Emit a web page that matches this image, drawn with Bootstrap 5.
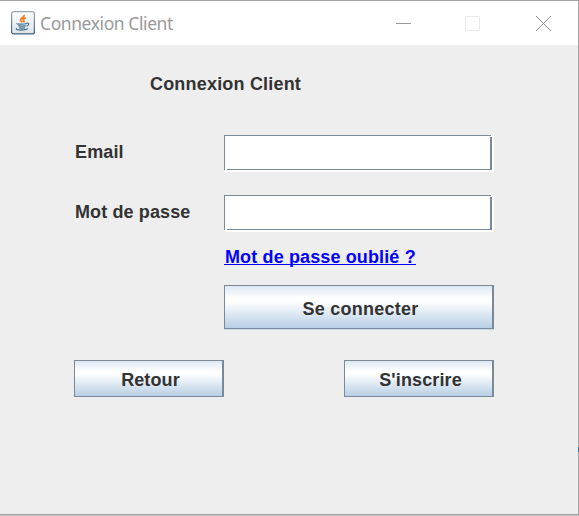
<!DOCTYPE html>
<html lang="fr">
<head>
<meta charset="utf-8">
<meta name="viewport" content="width=device-width, initial-scale=1">
<title>Connexion Client</title>
<link href="https://cdn.jsdelivr.net/npm/bootstrap@5.3.0/dist/css/bootstrap.min.css" rel="stylesheet">
<style>
body { font: bold 18px/20px "Liberation Sans", Arial, sans-serif; color: #333; background: #c4c4c4; overflow: hidden; }
.app-window { width: 579px; height: 515px; background: #eee; border: solid #a3a3a3; border-width: 1px 1px 1px 0; }
.title-bar { height: 44px; background: #fff; padding-left: 11px; }
.title-text { font: 17.5px/24px "Noto Sans", "Open Sans", sans-serif; letter-spacing: -.42px; color: #999; margin-left: 5px; }
.win-controls { gap: 55px; margin-right: 27px; }
.win-controls svg:first-child { margin-right: -1px; }
.win-controls svg:last-child { margin-left: 1px; }
.form-area { width: 420px; margin-left: 74px; }
.heading { font: inherit; letter-spacing: .19px; padding: 29px 0 0 76px; height: 90px; }
.form-line { height: 60px; }
.form-line + .form-line { height: 52px; }
.form-line label { width: 150px; padding: 7px 0 0 1px; letter-spacing: .12px; }
.swing-field { width: 270px; height: 37px; border: 0; padding: 4px 6px; outline: 0;
  background:
    linear-gradient(#7a8a99,#7a8a99) 0 0/267px 1px,
    linear-gradient(#7a8a99,#7a8a99) 0 0/1px 35px,
    linear-gradient(#7a8a99,#7a8a99) 3px 34px/265px 1px,
    linear-gradient(#7a8a99,#7a8a99) 266px 2px/2px 33px,
    linear-gradient(#eee,#eee) 0 35px/1px 2px,
    linear-gradient(#eee,#eee) 268px 0/2px 1px,
    #fff;
  background-repeat: no-repeat; }
.forgot { color: #00f; margin-left: 151px; letter-spacing: .13px; text-decoration: none; height: 20px; position: relative; }
.forgot::after { content: ""; position: absolute; left: -1px; right: 0; top: 17px; height: 1px; background: #00f; }
.swing-btn { font: inherit; letter-spacing: .12px; color: #333; border: solid #7a8a99; border-width: 1px 2px 1px 1px; border-radius: 0; padding: 0;
  height: 37px; width: 150px; background: linear-gradient(#dde8f3 0%, #fff 30%, #fff 36%, #b8cfe5 100%); }
.swing-btn:hover { color: #333; border-color: #7a8a99; }
.swing-btn.primary-action { width: 270px; height: 44px; letter-spacing: .24px; padding-top: 2px; margin: 18px 0 31px 150px; box-shadow: 0 1px 0 #c9dae9; }
.swing-btn span { position: relative; left: 2px; top: 1px; }
.edge-mark { position: absolute; left: 578px; top: 447px; width: 1px; height: 5px; background: #3b6c93; }
</style>
</head>
<body>
<main class="app-window d-flex flex-column">
  <header class="title-bar d-flex align-items-center">
    <svg width="24" height="24" viewBox="0 0 24 24" aria-hidden="true">
      <defs>
        <linearGradient id="tile" x2="0" y2="1"><stop stop-color="#fff"/><stop offset="1" stop-color="#dce3e9"/></linearGradient>
        <linearGradient id="rim" x2="0" y2="1"><stop stop-color="#9aa7b2"/><stop offset="1" stop-color="#42617b"/></linearGradient>
      </defs>
      <rect x=".6" y=".6" width="22.8" height="22.3" rx="2" fill="url(#tile)" stroke="url(#rim)" stroke-width="1.2"/>
      <path d="M12.9 4c1.1 2.3-3.6 3-3.3 5 .1.9 1.1 1.5 1.7 2.3M14.8 6.9c-2.5.9-3 1.6-2.1 2.6.5.6.3 1.2-.3 1.7" fill="none" stroke="#ee7b22" stroke-width="1.8"/>
      <path d="M6 12.5c-1.2.8 7.5 1 9.6 0M7.2 14.6c1.6.7 6 .7 7.6 0M8.2 16.6c1.2.6 4.7.6 5.8 0M15.6 12.3c3-.6 2.8 2.4-.1 2.9M5.8 17.3c-2.8 2.2 8.8 2.3 11 .2" fill="none" stroke="#4f7895" stroke-width="1.3"/>
    </svg>
    <span class="title-text">Connexion Client</span>
    <div class="win-controls d-flex align-items-center ms-auto">
      <svg width="15" height="15" aria-label="Réduire"><path d="M0 7.5h15" stroke="#999"/></svg>
      <svg width="15" height="15" aria-label="Agrandir"><path d="M.5.5h14v14H.5z" fill="none" stroke="#e9e9e9"/></svg>
      <svg width="15" height="15" aria-label="Fermer"><path d="M0 0l15 15M15 0L0 15" stroke="#888"/></svg>
    </div>
  </header>
  <form class="form-area d-flex flex-column align-items-start">
    <h1 class="heading m-0 flex-shrink-0">Connexion Client</h1>
    <div class="form-line d-flex align-items-start">
      <label for="email">Email</label>
      <input id="email" type="text" class="swing-field">
    </div>
    <div class="form-line d-flex align-items-start">
      <label for="password">Mot de passe</label>
      <input id="password" type="password" class="swing-field">
    </div>
    <a class="forgot" href="#">Mot de passe oublié ?</a>
    <button type="button" class="btn swing-btn primary-action"><span>Se connecter</span></button>
    <div class="d-flex justify-content-between w-100">
      <button type="button" class="btn swing-btn"><span>Retour</span></button>
      <button type="button" class="btn swing-btn"><span>S'inscrire</span></button>
    </div>
  </form>
</main>
<div class="edge-mark"></div>
<script src="https://cdn.jsdelivr.net/npm/bootstrap@5.3.0/dist/js/bootstrap.bundle.min.js"></script>
</body>
</html>
